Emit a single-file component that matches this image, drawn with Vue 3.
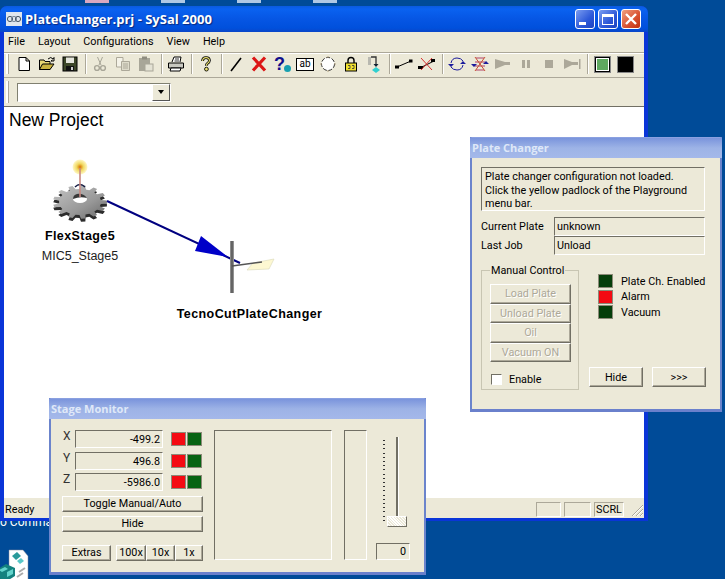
<template>
  <div class="desktop">
    <div class="desk-bits">
      <i class="bit pink"></i><i class="bit"></i><i class="bit"></i><i class="bit"></i>
    </div>
    <div class="desk-label">o Comma...</div>
    <svg class="desk-icon" width="32" height="32" viewBox="0 0 32 32">
      <path d="M11 2 L25 2 L30 8 L30 32 L11 32 Z" fill="#fff" stroke="#889" stroke-width=".5" />
      <path d="M14 8 l5 -4 l4 4 l-5 4 Z" fill="#2a9a9a" />
      <path d="M19 13 l4 -3 l3 3 l-4 3 Z" fill="#5ac8c8" />
      <path d="M0 21 l8 -5 l9 4 l0 8 l-8 5 l-9 -3 Z" fill="#14827f" />
      <path d="M1 22 l6 -3 l3 2 l-6 3 Z M9 24 l6 -3 l0 5 l-6 3 Z" fill="#63d4cc" />
      <path d="M21 24 l6 -4 M19 29 l6 -4" stroke="#aaa" stroke-width="2" />
    </svg>

    <!-- Fenetre principale -->
    <div class="window">
      <div class="titlebar">
        <svg class="app-icon" width="16" height="16" viewBox="0 0 16 16">
          <rect x="0" y="1" width="16" height="14" fill="#dfe6ee" />
          <circle cx="4" cy="8" r="2.6" fill="none" stroke="#456" />
          <circle cx="8" cy="8" r="2.6" fill="none" stroke="#789" />
          <circle cx="12" cy="8" r="2.6" fill="none" stroke="#456" />
        </svg>
        <span class="title-text">PlateChanger.prj - SySal 2000</span>
        <div class="caption">
          <div class="cap-btn">
            <span class="cap-min"></span>
          </div>
          <div class="cap-btn">
            <span class="cap-max"></span>
          </div>
          <div class="cap-btn cap-close">
            <svg width="14" height="14" viewBox="0 0 14 14"><path d="M2 2 L12 12 M12 2 L2 12" stroke="#fff" stroke-width="2.4" /></svg>
          </div>
        </div>
      </div>

      <div class="menubar">
        <span v-for="m in menus" :key="m">{{ m }}</span>
      </div>

      <div class="toolbar">
        <i class="grip"></i>
        <div class="tb">
          <svg width="16" height="16" viewBox="0 0 16 16"><path d="M3 1.5 H10 L13.5 5 V14.5 H3 Z M10 1.5 V5 H13.5" fill="#fff" stroke="#000" /></svg>
        </div>
        <div class="tb">
          <svg width="18" height="16" viewBox="0 0 18 16"><path d="M1.5 4 H6 L7 5.5 H12 V13.5 H1.5 Z" fill="#e8d874" stroke="#000" /><path d="M1.5 13.5 L4.5 8 H16 L12 13.5 Z" fill="#c9b23e" stroke="#000" /><path d="M10 3 Q13 0 15 3 L16 1.5 V5 H13 L14.5 4" fill="none" stroke="#000" /></svg>
        </div>
        <div class="tb">
          <svg width="16" height="16" viewBox="0 0 16 16"><rect x="1" y="1" width="14" height="14" fill="#3c4628" stroke="#000" /><rect x="4" y="1.5" width="8" height="5.5" fill="#e4e4dc" /><rect x="4" y="10" width="8" height="5" fill="#111" /><rect x="9" y="11" width="2" height="3" fill="#ccc" /></svg>
        </div>
        <i class="sep"></i>
        <div class="tb">
          <svg width="16" height="16" viewBox="0 0 16 16"><path d="M5.5 1 L9 9 M10.5 1 L7 9" stroke="#a8a698" fill="none" /><circle cx="5" cy="12" r="2.4" fill="none" stroke="#a8a698" stroke-width="1.4" /><circle cx="11" cy="12" r="2.4" fill="none" stroke="#a8a698" stroke-width="1.4" /></svg>
        </div>
        <div class="tb">
          <svg width="16" height="16" viewBox="0 0 16 16"><path d="M1.5 1.5 H8 V11 H1.5 Z" fill="#f4f2e8" stroke="#aca899" /><path d="M6.5 5.5 H14.5 V14.5 H6.5 Z" fill="#dedbca" stroke="#aca899" /><path d="M8 8 H13 M8 10 H13 M8 12 H13" stroke="#aca899" /></svg>
        </div>
        <div class="tb">
          <svg width="16" height="16" viewBox="0 0 16 16"><rect x="1" y="2" width="11" height="13" fill="#a8a698" /><rect x="4" y="0.5" width="5" height="3" fill="#8f8d80" /><rect x="7" y="8" width="8" height="7" fill="#e4e2d4" stroke="#a8a698" /></svg>
        </div>
        <i class="sep"></i>
        <div class="tb">
          <svg width="18" height="16" viewBox="0 0 18 16"><path d="M5 6 L7 1 H14 L13 6" fill="#fff" stroke="#000" /><path d="M1.5 7 H16.5 V12 H1.5 Z" fill="#c8c8c0" stroke="#000" /><path d="M4 12 H14 L13 15 H3 Z" fill="#fff" stroke="#000" /><path d="M8 3 H12 M7.5 5 H12" stroke="#000" stroke-width=".8" /></svg>
        </div>
        <i class="sep"></i>
        <div class="tb">
          <svg width="12" height="16" viewBox="0 0 14 18"><path d="M3 5.5 Q3 1.5 7 1.5 Q11 1.5 11 5 Q11 7 8.5 8.5 Q7.5 9.2 7.5 11" fill="none" stroke="#000" stroke-width="3.2" /><path d="M3 5.5 Q3 1.5 7 1.5 Q11 1.5 11 5 Q11 7 8.5 8.5 Q7.5 9.2 7.5 11" fill="none" stroke="#e8e070" stroke-width="1.3" /><circle cx="7.5" cy="15" r="2.2" fill="#e8e070" stroke="#000" /></svg>
        </div>
        <i class="sep"></i>
        <div class="tb">
          <svg width="16" height="16" viewBox="0 0 16 16"><path d="M13 2 L3 15" stroke="#000" stroke-width="1.6" /></svg>
        </div>
        <div class="tb">
          <svg width="16" height="16" viewBox="0 0 16 16"><path d="M2 1.5 L14 14.5 M14 1.5 L2 14.5" stroke="#dc1616" stroke-width="3.2" /></svg>
        </div>
        <div class="tb">
          <span class="q-mark">?</span><i class="q-dot"></i>
        </div>
        <div class="tb">
          <span class="ab-box">ab</span>
        </div>
        <div class="tb">
          <svg width="18" height="18" viewBox="0 0 18 18"><circle cx="9" cy="9" r="6.5" fill="#fff" stroke="#333" stroke-dasharray="4 1.6" /><path d="M9 1 V3 M9 15 V17 M1 9 H3 M15 9 H17" stroke="#b0a080" /></svg>
        </div>
        <div class="tb">
          <svg width="14" height="16" viewBox="0 0 14 16"><path d="M4 7 V4.5 Q4 1.5 7 1.5 Q10 1.5 10 4.5 V7" fill="none" stroke="#000" stroke-width="1.4" /><rect x="1.5" y="7" width="11" height="8" fill="#f0e030" stroke="#000" /><path d="M4 9.5 H6 V12.5 H4 M8 9.5 H10 V12.5 H8" fill="none" stroke="#333" stroke-width=".8" /></svg>
        </div>
        <div class="tb">
          <svg width="14" height="18" viewBox="0 0 14 18"><path d="M1 2 H4 V10 H1 Z" fill="#b8b8b0" /><path d="M4 2 H9 V10" fill="none" stroke="#333" stroke-width="1.3" /><path d="M6.5 9 H11.5 L9 12 Z" fill="#123" /><path d="M9 12 L13 15 L9 18 L5 15 Z" fill="#30d0d0" /></svg>
        </div>
        <i class="sep"></i>
        <div class="tb">
          <svg width="18" height="14" viewBox="0 0 18 14"><path d="M2 10 L16 4" stroke="#000" /><rect x="0" y="8.5" width="4" height="3" fill="#000" /><rect x="14" y="2.5" width="3.5" height="3" fill="#000" /></svg>
        </div>
        <div class="tb">
          <svg width="18" height="16" viewBox="0 0 18 16"><path d="M2 12 L16 5" stroke="#000" /><rect x="0" y="10" width="5" height="3" fill="#000" /><rect x="13" y="3" width="4" height="3" fill="#000" /><path d="M3 2 L14 14 M14 2 L3 14" stroke="#d83030" /></svg>
        </div>
        <i class="sep"></i>
        <div class="tb">
          <svg width="18" height="16" viewBox="0 0 18 16"><path d="M3 7 Q4 2 9 2 Q13 2 15 5 M15 9 Q14 14 9 14 Q5 14 3 11" fill="none" stroke="#1c1c9c" /><path d="M0 8 H6 L3 11 Z M12 8 H18 L15 5 Z" fill="#1c1c9c" /></svg>
        </div>
        <div class="tb">
          <svg width="18" height="18" viewBox="0 0 18 18"><path d="M4 7 L14 7 M4 11 H14 M5 3 H13 M5 15 H13" stroke="#b04068" /><path d="M0 9 H6 L3 12 Z M12 9 H18 L15 6 Z" fill="#1c1c9c" /><path d="M4 2 L14 16 M14 2 L4 16" stroke="#c85030" /></svg>
        </div>
        <div class="tb">
          <svg width="16" height="12" viewBox="0 0 16 12"><path d="M0 1 L10 4 H15 V7 H10 L0 11 Z" fill="#aca899" /></svg>
        </div>
        <div class="tb">
          <svg width="10" height="10" viewBox="0 0 10 10"><rect x="1" y="1" width="3" height="8" fill="#aca899" /><rect x="6" y="1" width="3" height="8" fill="#aca899" /></svg>
        </div>
        <div class="tb">
          <svg width="10" height="10" viewBox="0 0 10 10"><rect x="1" y="1" width="8" height="8" fill="#aca899" /></svg>
        </div>
        <div class="tb">
          <svg width="17" height="12" viewBox="0 0 17 12"><path d="M0 1 L8 4 H14 V7 H8 L0 11 Z" fill="#aca899" /><rect x="15" y="1" width="1.5" height="10" fill="#aca899" /></svg>
        </div>
        <i class="sep"></i>
        <div class="tb">
          <span class="screen green"></span>
        </div>
        <div class="tb">
          <span class="screen black"></span>
        </div>
      </div>

      <div class="comborow">
        <i class="grip"></i>
        <div class="combo">
          <div class="combo-btn"><i></i></div>
        </div>
      </div>

      <!-- Zone de dessin -->
      <div class="client">
        <div class="project">New Project</div>
        <svg class="diagram" width="640" height="391" viewBox="4 107 640 391">
          <defs>
            <radialGradient id="glow">
              <stop offset="0" stop-color="#d87000" />
              <stop offset=".45" stop-color="#f0d860" />
              <stop offset="1" stop-color="#fff8c8" />
            </radialGradient>
            <linearGradient id="gearfill" x1="0" y1="0" x2="1" y2="1">
              <stop offset="0" stop-color="#c4c4c4" />
              <stop offset=".6" stop-color="#989898" />
              <stop offset="1" stop-color="#686868" />
            </linearGradient>
            <linearGradient id="post" x1="0" y1="0" x2="1" y2="0">
              <stop offset="0" stop-color="#a0a0a0" />
              <stop offset=".5" stop-color="#505050" />
              <stop offset="1" stop-color="#a8a8a8" />
            </linearGradient>
          </defs>
          <circle cx="80" cy="167" r="7.5" fill="url(#glow)" />
          <polygon :points="gearShadow" fill="#2c2c2c" />
          <polygon :points="gearPoints" fill="url(#gearfill)" />
          <path d="M75 187 Q80 182 85 187" fill="none" stroke="#101840" stroke-width="1.4" />
          <ellipse cx="80" cy="199" rx="7" ry="4" fill="#fff" />
          <path d="M73 199 Q73 195 77 194 Q83 193 87 198 Q80 196 73 199 Z" fill="#383838" />
          <path d="M80 168 V197" stroke="#c88880" stroke-width="1.6" />
          <path d="M107 201 L240 263" stroke="#000080" stroke-width="2" />
          <polygon points="201,236 195,251 228,257" fill="#0000c8" />
          <rect x="230" y="241" width="4" height="52" fill="url(#post)" />
          <polygon points="247,270 253,263 274,259 269,269" fill="#fdf8d2" stroke="#d8d8b8" stroke-width=".6" />
          <path d="M232 266 L262 262" stroke="#555" stroke-width="1.6" />
        </svg>
        <div class="node-label strong n1">FlexStage5</div>
        <div class="node-label n2">MIC5_Stage5</div>
        <div class="node-label strong n3">TecnoCutPlateChanger</div>
      </div>

      <div class="statusbar">
        <span class="ready">Ready</span>
        <span class="pane p1"></span>
        <span class="pane p2"></span>
        <span class="pane p3">SCRL</span>
        <svg class="sizer" width="14" height="14" viewBox="0 0 14 14"><path d="M13 2 L2 13 M13 6 L6 13 M13 10 L10 13" stroke="#aca899" /><path d="M13 3 L3 13 M13 7 L7 13 M13 11 L11 13" stroke="#fff" /></svg>
      </div>
    </div>

    <!-- Plate Changer -->
    <div class="dialog plate">
      <div class="dlg-title">Plate Changer</div>
      <div class="plate-body">
        <div class="sunken message">Plate changer configuration not loaded.<br />Click the yellow padlock of the Playground<br />menu bar.</div>
        <div class="info-grid">
          <span>Current Plate</span>
          <div class="sunken field">unknown</div>
          <span>Last Job</span>
          <div class="sunken field">Unload</div>
        </div>
        <div class="plate-lower">
          <fieldset class="group">
            <legend>Manual Control</legend>
            <button v-for="b in manualButtons" :key="b" class="btn disabled" type="button">{{ b }}</button>
            <label class="enable"><i class="check"></i>Enable</label>
          </fieldset>
          <div class="plate-right">
            <div class="leds">
              <div v-for="l in plateLeds" :key="l.name" class="led-row">
                <i class="led" :class="l.color"></i>{{ l.name }}
              </div>
            </div>
            <div class="plate-btns">
              <button class="btn" type="button">Hide</button>
              <button class="btn" type="button">&gt;&gt;&gt;</button>
            </div>
          </div>
        </div>
      </div>
    </div>

    <!-- Stage Monitor -->
    <div class="dialog stage">
      <div class="dlg-title">Stage Monitor</div>
      <div class="stage-body">
        <div class="stage-left">
          <div v-for="a in axes" :key="a.name" class="axis">
            <span class="axis-name">{{ a.name }}</span>
            <div class="sunken axis-val">{{ a.value }}</div>
            <div class="axis-leds"><i class="led red"></i><i class="led dark"></i></div>
          </div>
          <button class="btn wide first" type="button">Toggle Manual/Auto</button>
          <button class="btn wide" type="button">Hide</button>
          <div class="speed">
            <button class="btn extras" type="button">Extras</button>
            <div class="speed-group">
              <button class="btn s100" type="button">100x</button>
              <button class="btn s10" type="button">10x</button>
              <button class="btn s1" type="button">1x</button>
            </div>
          </div>
        </div>
        <div class="sunken big-box"></div>
        <div class="sunken thin-box"></div>
        <div class="slider-col">
          <div class="slider">
            <div class="ticks"></div>
            <div class="track"></div>
            <div class="thumb"></div>
          </div>
          <div class="sunken slider-val">0</div>
        </div>
      </div>
    </div>
  </div>
</template>

<script setup>
const menus = ['File', 'Layout', 'Configurations', 'View', 'Help']
const manualButtons = ['Load Plate', 'Unload Plate', 'Oil', 'Vacuum ON']
const plateLeds = [
  { name: 'Plate Ch. Enabled', color: 'dark' },
  { name: 'Alarm', color: 'red' },
  { name: 'Vacuum', color: 'dark' }
]
const axes = [
  { name: 'X', value: '-499.2' },
  { name: 'Y', value: '496.8' },
  { name: 'Z', value: '-5986.0' }
]

// Roue dentee legerement ecrasee (vue en perspective)
function gear(cx, cy) {
  const pts = []
  const teeth = 13
  for (let i = 0; i < teeth; i++) {
    const a = (i / teeth) * Math.PI * 2
    const step = (Math.PI * 2) / teeth
    const offs = [[-0.3, 21], [-0.17, 27], [0.17, 27], [0.3, 21]]
    for (const [o, r] of offs) {
      const t = a + o * step
      pts.push(`${(cx + Math.cos(t) * r).toFixed(1)},${(cy + Math.sin(t) * r * 0.62).toFixed(1)}`)
    }
  }
  return pts.join(' ')
}
const gearPoints = gear(80, 202)
const gearShadow = gear(80, 205)
</script>

<style scoped>
.desktop {
  position: relative;
  width: 725px;
  height: 579px;
  overflow: hidden;
  background: #004b98;
  font-family: Roboto, "Liberation Sans", sans-serif;
  font-size: 10.8px;
  color: #000;
}

.desk-bits {
  display: flex;
  gap: 52px;
  padding-left: 85px;
}

.bit {
  width: 24px;
  height: 3px;
  background: #b0c8e4;
}

.bit.pink {
  background: #d8a8c0;
}

.desk-label {
  position: absolute;
  left: 0;
  top: 515px;
  color: #fff;
  font-size: 12px;
}

.desk-icon {
  position: absolute;
  left: -2px;
  top: 548px;
}

/* Fenetre principale */
.window {
  position: absolute;
  left: 0;
  top: 6px;
  width: 648px;
  height: 515px;
  display: flex;
  flex-direction: column;
  box-sizing: border-box;
  padding: 0 4px 3px;
  background: #0a35d8;
  border-radius: 7px 7px 0 0;
}

.titlebar {
  flex: 0 0 26px;
  margin: 0 -4px;
  padding: 0 7px 0 6px;
  display: flex;
  align-items: center;
  border-radius: 7px 7px 0 0;
  background: linear-gradient(#0a5ae0, #0a62f0 12%, #0656e4 50%, #0050dc 85%, #0a46c8);
}

.app-icon {
  margin-right: 3px;
}

.title-text {
  color: #fff;
  font-family: "Open Sans", sans-serif;
  font-size: 13px;
  font-weight: 700;
  text-shadow: 1px 1px 1px #0a2a80;
}

.caption {
  margin-left: auto;
  display: flex;
  gap: 3px;
}

.cap-btn {
  position: relative;
  width: 20px;
  height: 20px;
  box-sizing: border-box;
  border: 1px solid #fff;
  border-radius: 3px;
  background: linear-gradient(135deg, #7a9cf0, #2c58d8 60%, #1c44c0);
  display: flex;
  align-items: center;
  justify-content: center;
}

.cap-close {
  background: linear-gradient(135deg, #f0a080, #d85030 60%, #c03010);
}

.cap-min {
  width: 7px;
  height: 3px;
  background: #fff;
  margin: 9px 5px 0 0;
}

.cap-max {
  width: 12px;
  height: 11px;
  box-sizing: border-box;
  border: 1px solid #fff;
  border-top-width: 3px;
}

.menubar {
  flex: 0 0 20px;
  display: flex;
  align-items: center;
  gap: 13px;
  padding: 0 0 2px 4px;
  box-sizing: border-box;
  background: #ece9d8;
}

.toolbar {
  flex: 0 0 26px;
  box-sizing: border-box;
  display: flex;
  align-items: center;
  padding: 0 0 2px 2px;
  background: #ece9d8;
  border-top: 1px solid #aca899;
  border-bottom: 1px solid #aca899;
  box-shadow: inset 0 1px 0 #fff;
}

.grip {
  flex: none;
  width: 2px;
  height: 20px;
  background: #fff;
  border-right: 1px solid #aca899;
  margin-right: 3.5px;
}

.tb {
  position: relative;
  flex: none;
  width: 23px;
  height: 22px;
  display: flex;
  align-items: center;
  justify-content: center;
}

.sep {
  flex: none;
  width: 1px;
  height: 20px;
  margin: 0 2px 0 3px;
  background: #aca899;
  border-right: 1px solid #fff;
}

.q-mark {
  color: #10108c;
  font-family: "Liberation Sans", sans-serif;
  font-size: 18px;
  font-weight: 700;
  margin-left: -5px;
}

.q-dot {
  position: absolute;
  left: 13px;
  top: 12px;
  width: 7px;
  height: 7px;
  border-radius: 50%;
  background: #18a0b0;
}

.ab-box {
  width: 16px;
  height: 11px;
  line-height: 10px;
  text-align: center;
  font-size: 10px;
  border: 1px solid #000;
  background: #fff;
}

.screen {
  width: 13px;
  height: 13px;
  border: 1px solid #000;
  outline: 1px solid #888;
  box-sizing: content-box;
}

.screen.green {
  background: #5fa860;
  box-shadow: inset 0 0 0 1px #fff;
}

.screen.black {
  background: #000;
}

.comborow {
  flex: 0 0 28px;
  display: flex;
  align-items: center;
  padding-left: 2px;
  background: #ece9d8;
}

.comborow .grip {
  margin-right: 8px;
  height: 22px;
}

.combo {
  width: 154px;
  height: 19px;
  box-sizing: border-box;
  display: flex;
  justify-content: flex-end;
  background: #fff;
  border: 1px solid;
  border-color: #808070 #fff #fff #808070;
}

.combo-btn {
  width: 16px;
  background: #ece9d8;
  border: 1px solid;
  border-color: #fff #555 #555 #fff;
  display: flex;
  align-items: center;
  justify-content: center;
}

.combo-btn i {
  border-left: 3.5px solid transparent;
  border-right: 3.5px solid transparent;
  border-top: 4px solid #000;
}

.client {
  position: relative;
  flex: 1;
  background: #fff;
  border-top: 1px solid #716f64;
}

.project {
  position: absolute;
  left: 5px;
  top: 3px;
  font-family: "Liberation Sans", sans-serif;
  font-size: 17.5px;
}

.diagram {
  position: absolute;
  left: 0;
  top: 0;
}

.node-label {
  position: absolute;
  font-family: "Liberation Sans", sans-serif;
  font-size: 12.5px;
  white-space: nowrap;
  transform: translateX(-50%);
  color: #222;
}

.node-label.strong {
  font-weight: 700;
  color: #000;
  letter-spacing: .42px;
}

.n1 { left: 76px; top: 122px; }
.n2 { left: 76px; top: 142px; }
.n3 { left: 245.5px; top: 200px; }

.statusbar {
  flex: 0 0 20px;
  box-sizing: border-box;
  display: flex;
  align-items: flex-end;
  background: #ece9d8;
  padding: 0 0 1px 1px;
}

.ready {
  margin-right: auto;
  padding-bottom: 1px;
}

.pane {
  height: 15px;
  box-sizing: border-box;
  border: 1px solid;
  border-color: #aca899 #fff #fff #aca899;
  margin-left: 3px;
  line-height: 13px;
}

.p1 { width: 25px; }
.p2 { width: 27px; }
.p3 { width: 30px; padding-left: 1px; }

.sizer {
  margin-left: 6px;
}

/* Boites de dialogue flottantes */
.dialog {
  position: absolute;
  box-sizing: border-box;
  background: #ece9d8;
  border: 2px solid #6b84cc;
  border-top: 1px solid #8aa0e0;
  border-bottom: 3px solid #6a80cc;
  display: flex;
  flex-direction: column;
}

.dlg-title {
  flex: none;
  height: 20px;
  line-height: 20px;
  margin: 0 -2px;
  padding-left: 2px;
  color: #dfe8f8;
  font-family: "Open Sans", sans-serif;
  font-size: 11px;
  font-weight: 700;
  background: linear-gradient(#7a94dc, #9db3e6 50%, #a4b8ea);
}

.sunken {
  box-sizing: border-box;
  border: 1px solid;
  border-color: #716f64 #fff #fff #716f64;
}

.btn {
  box-sizing: border-box;
  margin: 0;
  padding: 0;
  font: inherit;
  color: #000;
  background: #ece9d8;
  border: 1px solid;
  border-color: #fff #716f64 #716f64 #fff;
  box-shadow: inset -1px -1px 0 #aca899;
}

.btn.disabled {
  color: #aca899;
  text-shadow: 1px 1px 0 #fff;
}

.led {
  display: block;
  box-sizing: border-box;
  flex: none;
  width: 15px;
  height: 14px;
  border: 1px solid #8c8a78;
}

.led.dark { background: #053e0a; }
.led.red { background: #f40a12; }

/* Plate Changer */
.plate {
  left: 470px;
  top: 137px;
  width: 252px;
  height: 275px;
}

.plate-body {
  padding: 9px 15px 0 9px;
  display: flex;
  flex-direction: column;
}

.message {
  height: 44px;
  padding: 2px 0 0 3px;
  line-height: 13.5px;
  white-space: nowrap;
}

.info-grid {
  display: grid;
  grid-template-columns: 73px 1fr;
  grid-auto-rows: 19px;
  align-items: center;
  margin-top: 6px;
}

.field {
  height: 19px;
  line-height: 18px;
  padding-left: 2px;
}

.plate-lower {
  display: flex;
  margin-top: 9px;
}

.group {
  box-sizing: border-box;
  width: 98px;
  height: 126px;
  margin: 0;
  padding: 7px 7px 0 8px;
  border: 1px solid #c8c5b2;
  display: flex;
  flex-direction: column;
}

.group legend {
  margin-left: 0;
  padding: 0 1px;
  white-space: nowrap;
}

.group .btn {
  display: block;
  width: 81px;
  height: 19.5px;
}

.enable {
  display: flex;
  align-items: center;
  margin: 11px 0 0 1px;
}

.check {
  width: 11px;
  height: 11px;
  margin-right: 7px;
  box-sizing: border-box;
  background: #fff;
  border: 1px solid;
  border-color: #716f64 #fff #fff #716f64;
}

.plate-right {
  flex: 1;
  display: flex;
  flex-direction: column;
  padding: 10px 0 0 10px;
}

.leds {
  margin-left: 9px;
  display: flex;
  flex-direction: column;
  gap: 1.5px;
}

.led-row {
  display: flex;
  align-items: center;
  white-space: nowrap;
  height: 14px;
}

.led-row .led {
  margin-right: 8px;
}

.plate-btns {
  margin-top: 48px;
  display: flex;
  gap: 9px;
}

.plate-btns .btn {
  width: 54px;
  height: 20px;
}

/* Stage Monitor */
.stage {
  left: 49px;
  top: 398px;
  width: 377px;
  height: 177px;
}

.stage-body {
  flex: 1;
  display: flex;
  padding: 11px 14px 0 11px;
}

.stage-left {
  width: 141px;
  margin-right: 11px;
}

.axis {
  display: flex;
  height: 21.5px;
  align-items: flex-start;
}

.axis-name {
  width: 13px;
  color: #333;
  font-size: 12px;
  padding-left: 1px;
  box-sizing: border-box;
  line-height: 12px;
}

.axis-val {
  width: 88px;
  height: 18px;
  line-height: 17px;
  text-align: right;
  padding-right: 2px;
}

.axis-leds {
  display: flex;
  margin: 2px 0 0 8px;
  gap: 1px;
}

.axis-leds .led.dark {
  background: #076312;
}

.wide {
  display: block;
  width: 141px;
  height: 16px;
  line-height: 14px;
  margin-top: 4px;
}

.wide.first {
  margin-top: 1px;
}

.speed {
  display: flex;
  margin-top: 13px;
}

.speed .btn {
  height: 16px;
  line-height: 14px;
}

.extras {
  width: 49px;
}

.speed-group {
  display: flex;
  margin-left: 5px;
}

.s100 { width: 30px; }
.s10 { width: 29px; }
.s1 { width: 28px; }

.big-box {
  width: 119px;
  height: 130px;
  margin-right: 12px;
}

.thin-box {
  width: 23px;
  height: 130px;
  margin-right: 9px;
}

.slider-col {
  width: 34px;
  display: flex;
  flex-direction: column;
}

.slider {
  position: relative;
  height: 113px;
}

.ticks {
  position: absolute;
  left: 7px;
  top: 10px;
  width: 2px;
  height: 84px;
  background: repeating-linear-gradient(#333 0 1px, transparent 1px 4.2px);
}

.track {
  position: absolute;
  left: 20px;
  top: 7px;
  width: 2px;
  height: 84px;
  background: #716f64;
  border-right: 1px solid #fff;
}

.thumb {
  position: absolute;
  left: 11px;
  top: 86px;
  width: 20px;
  height: 11px;
  box-sizing: border-box;
  background: #ece9d8;
  border: 1px solid;
  border-color: #fff #716f64 #716f64 #fff;
  background-image: repeating-linear-gradient(45deg, #ece9d8 0 1px, #fff 1px 2px);
}

.slider-val {
  height: 17px;
  line-height: 15px;
  text-align: right;
  padding-right: 3px;
}
</style>

<style>
body {
  background: #004b98;
}
</style>
